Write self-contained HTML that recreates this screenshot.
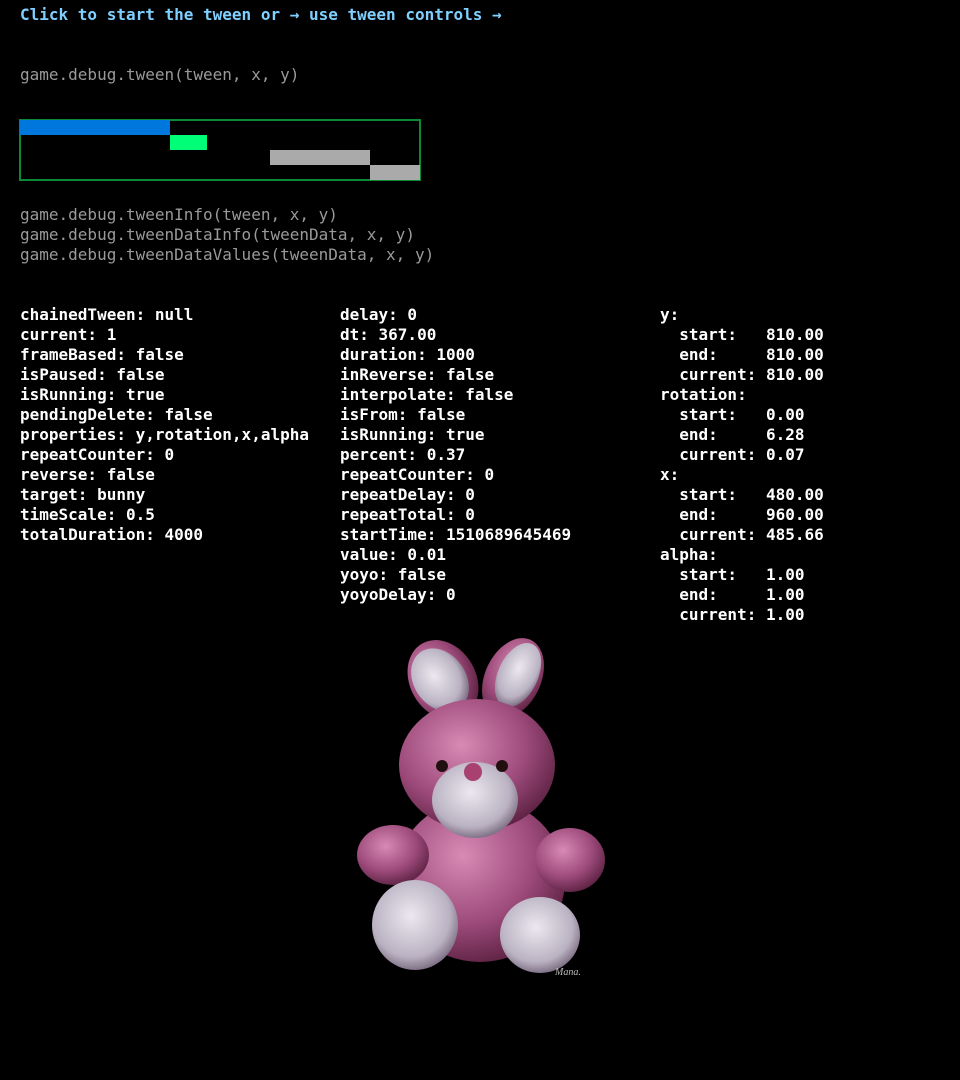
<!DOCTYPE html>
<html><head><meta charset="utf-8"><style>
html,body{margin:0;padding:0;background:#000;width:960px;height:1080px;overflow:hidden}
body{font-family:"DejaVu Sans Mono","Liberation Mono",monospace;font-size:16px;line-height:20px;position:relative}
.t{position:absolute;white-space:pre}
.b{font-weight:bold}
.g{color:#9a9a9a}
.w{color:#fff}
</style></head><body>
<div class="t b" style="left:20px;top:5px;color:#7fd0ff">Click to start the tween or → use tween controls →</div>
<div class="t g" style="left:20px;top:65px">game.debug.tween(tween, x, y)</div>
<div style="position:absolute;left:19px;top:119px;width:398px;height:58px;border:2px solid #0a8a35"></div>
<div style="position:absolute;left:20px;top:120px;width:150px;height:15px;background:#0077dd"></div>
<div style="position:absolute;left:170px;top:135px;width:37px;height:15px;background:#00ff77"></div>
<div style="position:absolute;left:270px;top:150px;width:100px;height:15px;background:#aaa"></div>
<div style="position:absolute;left:370px;top:165px;width:50px;height:15px;background:#aaa"></div>
<div class="t g" style="left:20px;top:205px">game.debug.tweenInfo(tween, x, y)
game.debug.tweenDataInfo(tweenData, x, y)
game.debug.tweenDataValues(tweenData, x, y)</div>
<div class="t w b" style="left:20px;top:305px">chainedTween: null
current: 1
frameBased: false
isPaused: false
isRunning: true
pendingDelete: false
properties: y,rotation,x,alpha
repeatCounter: 0
reverse: false
target: bunny
timeScale: 0.5
totalDuration: 4000</div>
<div class="t w b" style="left:340px;top:305px">delay: 0
dt: 367.00
duration: 1000
inReverse: false
interpolate: false
isFrom: false
isRunning: true
percent: 0.37
repeatCounter: 0
repeatDelay: 0
repeatTotal: 0
startTime: 1510689645469
value: 0.01
yoyo: false
yoyoDelay: 0</div>
<div class="t w b" style="left:660px;top:305px">y:
  start:   810.00
  end:     810.00
  current: 810.00
rotation:
  start:   0.00
  end:     6.28
  current: 0.07
x:
  start:   480.00
  end:     960.00
  current: 485.66
alpha:
  start:   1.00
  end:     1.00
  current: 1.00</div>
<svg style="position:absolute;left:0;top:0" width="960" height="1080">
<defs>
<radialGradient id="p" cx="40%" cy="35%" r="70%"><stop offset="0" stop-color="#d88ab4"/><stop offset="0.6" stop-color="#9c4a7a"/><stop offset="1" stop-color="#5a2040"/></radialGradient>
<radialGradient id="s" cx="45%" cy="40%" r="65%"><stop offset="0" stop-color="#ece8f0"/><stop offset="0.7" stop-color="#bab2c2"/><stop offset="1" stop-color="#6e5e74"/></radialGradient>
</defs>
<ellipse cx="443" cy="680" rx="33" ry="42" transform="rotate(-30 443 680)" fill="url(#p)"/>
<ellipse cx="440" cy="680" rx="26" ry="34" transform="rotate(-35 440 680)" fill="url(#s)"/>
<ellipse cx="513" cy="678" rx="28" ry="42" transform="rotate(25 513 678)" fill="url(#p)"/>
<ellipse cx="518" cy="675" rx="20" ry="34" transform="rotate(25 518 675)" fill="url(#s)"/>
<ellipse cx="480" cy="880" rx="85" ry="82" fill="url(#p)"/>
<ellipse cx="393" cy="855" rx="36" ry="30" fill="url(#p)"/>
<ellipse cx="570" cy="860" rx="35" ry="32" fill="url(#p)"/>
<ellipse cx="477" cy="765" rx="78" ry="66" fill="url(#p)"/>
<ellipse cx="475" cy="800" rx="43" ry="38" fill="url(#s)"/>
<circle cx="473" cy="772" r="9" fill="#a84070"/>
<circle cx="442" cy="766" r="6" fill="#221010"/>
<circle cx="502" cy="766" r="6" fill="#221010"/>
<ellipse cx="415" cy="925" rx="43" ry="45" fill="url(#s)"/>
<ellipse cx="540" cy="935" rx="40" ry="38" fill="url(#s)"/>
<text x="555" y="975" fill="#bbb" font-size="10" font-family="Liberation Serif,serif" font-style="italic">Mana.</text>
</svg>
</body></html>
